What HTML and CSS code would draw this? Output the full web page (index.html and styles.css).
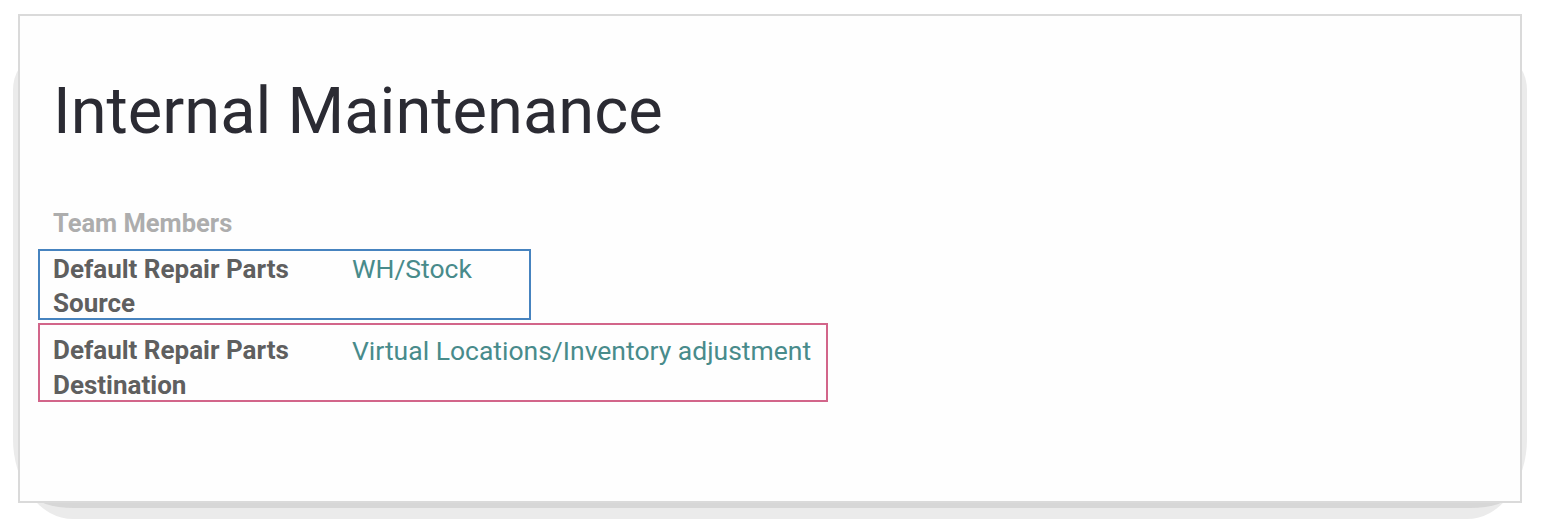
FILE: index.html
```html
<!DOCTYPE html>
<html>
<head>
<meta charset="utf-8">
<link rel="stylesheet" href="styles.css">
</head>
<body>
<div class="sheet">
  <h1 class="title">Internal Maintenance</h1>
  <div class="section-label">Team Members</div>
  <div class="field field-source">
    <div class="field-label">Default Repair Parts Source</div>
    <div class="field-value">WH/Stock</div>
  </div>
  <div class="field field-dest">
    <div class="field-label">Default Repair Parts Destination</div>
    <div class="field-value">Virtual Locations/Inventory adjustment</div>
  </div>
</div>
</body>
</html>
```

FILE: styles.css
```css
html {
  margin: 0;
  padding: 0;
  background: #ffffff;
  height: 100%;
}
body {
  margin: 0;
  min-height: 100%;
  box-sizing: border-box;
  font-family: Roboto, "Liberation Sans", Arial, sans-serif;
  padding: 14px 0 21px 18px;
}
.sheet {
  position: relative;
  box-sizing: border-box;
  width: 1504px;
  height: 489px;
  border: 2px solid #dadada;
  background: #fefefe;
  padding: 57px 0 0 33px;
}
.sheet::before {
  content: "";
  position: absolute;
  z-index: -1;
  top: 44px;
  left: -7px;
  right: -7px;
  bottom: -18px;
  background: #ebebeb;
  border-radius: 20px 20px 60px 60px / 30px 30px 80px 80px;
}
.sheet::after {
  content: "";
  position: absolute;
  z-index: -1;
  left: 14px;
  right: 10px;
  bottom: -7px;
  height: 30px;
  background: #d7d7d7;
  border-radius: 0 0 40px 40px / 0 0 14px 14px;
}
.title {
  margin: 0;
  font-size: 65px;
  line-height: 76px;
  font-weight: 400;
  color: #2b2b33;
}
.section-label {
  margin-top: 57px;
  font-size: 25.5px;
  line-height: 35px;
  font-weight: 700;
  color: #adadad;
}
.field {
  display: grid;
  grid-template-columns: 299px auto;
  box-sizing: border-box;
  margin-left: -15px;
  padding-left: 13px;
}
.field-label {
  font-size: 26px;
  font-weight: 700;
  color: #5f5f5f;
  width: 270px;
}
.field-value {
  font-size: 26.5px;
  color: #488b8b;
}
.field-source {
  margin-top: 8px;
  width: 493px;
  height: 71px;
  border: 2px solid #4683bf;
  padding-top: 1px;
  line-height: 34px;
}
.field-dest {
  margin-top: 3px;
  width: 790px;
  height: 79px;
  border: 2px solid #d2658a;
  padding-top: 8px;
  line-height: 35px;
}
```
